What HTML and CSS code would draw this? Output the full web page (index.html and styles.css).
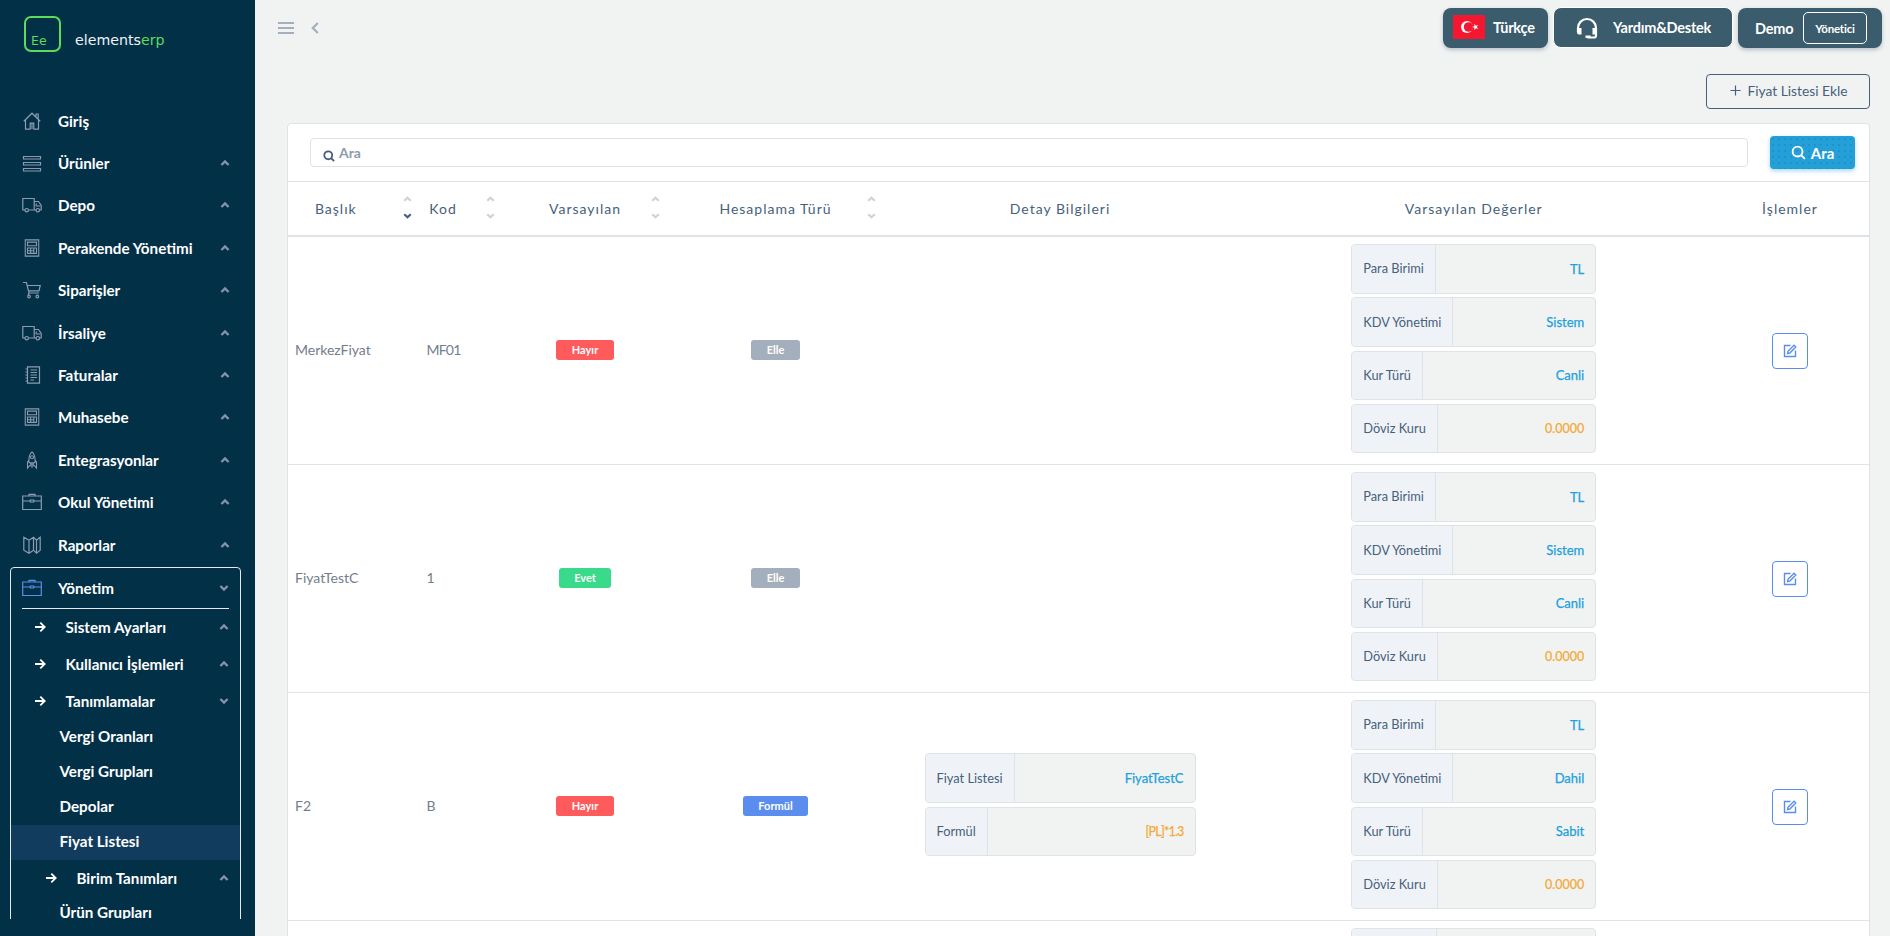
FILE: index.html
```html
<!DOCTYPE html>
<html lang="tr">

<head>
    <meta charset="UTF-8">
    <meta name="viewport" content="width=device-width, initial-scale=1.0">
    <title>Fiyat Listesi</title>
    <link rel="stylesheet" href="styles.css">
</head>

<body>
    <!-- icons -->
    <svg class="sprite" width="0" height="0">
        <symbol id="home" viewBox="0 0 18 18"><path d="M.8 9.3 9 1.2l8.2 8.1M2.5 8v9.2h4.7v-6h3.6v6h4.7V8M13 5V2h2.2v5.2M9 11v6"/></symbol>
        <symbol id="list" viewBox="0 0 18 18"><path d="M.5 2.500h17v2.500H.5zM.5 8.500h17v2.500H.5zM.5 14.500h17v2.500H.5z"/></symbol>
        <symbol id="truck" viewBox="0 0 20 18"><path d="M3 14H.8V2.500h11.400V14H6.500M12.200 5.500h4.300l2.700 4V14h-1.500M14 14h-1.800M14.200 7.500v2.500h4"/><circle cx="4.700" cy="14.200" r="1.700"/><circle cx="15.800" cy="14.200" r="1.700"/></symbol>
        <symbol id="calc" viewBox="0 0 18 20"><path d="M1.500 1h15v18h-15zM4 3.500h10v4H4zM4 10h10M4 13h7M4 16h10M4 9.500v7M7.500 9.500v7M11 9.500v7M14 9.500v7"/></symbol>
        <symbol id="cart" viewBox="0 0 18 18"><path d="M0 1.500h3.400L6 12h10M4.200 4.500h13L16 9.800H5.500M6 12l-1 2"/><circle cx="6" cy="15.500" r="1.300"/><circle cx="14.300" cy="15.500" r="1.300"/></symbol>
        <symbol id="note" viewBox="0 0 18 18"><path d="M4.500.8h12v16.400h-12zM7.500 4h6.500M7.500 6.500h6.500M7.500 9h6.500M7.500 11.500h6.500M7.500 14h3.500M2.500 3h2M2.500 6h2M2.500 9h2M2.500 12h2M2.500 15h2"/></symbol>
        <symbol id="rocket" viewBox="0 0 18 20"><path d="M9 1c-3 2.500-3.800 6-3.300 12h6.600C12.800 7 12 3.500 9 1zM5.600 10 4 12.500V19l2.500-3M12.400 10l1.600 2.500V19l-2.500-3M7.500 13v4M9 13v6M10.500 13v4"/><circle cx="9" cy="7" r="1.700"/></symbol>
        <symbol id="case" viewBox="0 0 20 18"><path d="M.7 3h18.600v13.500H.7zM7 3V1.300h6V3M.7 8H8M12 8h7.300M8.300 7h3.400v2H8.300z"/></symbol>
        <symbol id="map" viewBox="0 0 18 18"><path d="M.8 1.200 6 4.200l4.500-3 3 3 3.700-3v13l-3.700 3-3-3-4.500 3-5.200-3zM6 4.200v13M10.500 1.200v13M13.500 4.200v13"/></symbol>
        <symbol id="up" viewBox="0 0 10 8"><path d="m1.400 6 3.600-3.500L8.600 6"/></symbol>
        <symbol id="down" viewBox="0 0 10 8"><path d="M1.400 2 5 5.500 8.600 2"/></symbol>
        <symbol id="arrow" viewBox="0 0 12 12"><path d="M1 6h9.500M6.300 1.600 10.700 6l-4.400 4.400"/></symbol>
        <symbol id="search" viewBox="0 0 16 16"><circle cx="7" cy="7" r="5.300"/><path d="m11 11 3.800 3.800"/></symbol>
        <symbol id="edit" viewBox="0 0 14 14"><path d="M7.500 1.500h-6v11h11v-6M4.600 9.600l.4-2.300L11 1.300l1.800 1.800-6 6z"/></symbol>
    </svg>

    <div class="layout">
        <aside class="sidebar">
            <div class="brand">
                <span class="brand-logo">Ee</span>
                <span class="brand-text">elements<b>erp</b></span>
            </div>
            <nav class="menu">
                <a class="item"><svg class="icon"><use href="#home"/></svg>Giriş</a>
                <a class="item"><svg class="icon"><use href="#list"/></svg>Ürünler<svg class="chev"><use href="#up"/></svg></a>
                <a class="item"><svg class="icon"><use href="#truck"/></svg>Depo<svg class="chev"><use href="#up"/></svg></a>
                <a class="item"><svg class="icon"><use href="#calc"/></svg>Perakende Yönetimi<svg class="chev"><use href="#up"/></svg></a>
                <a class="item"><svg class="icon"><use href="#cart"/></svg>Siparişler<svg class="chev"><use href="#up"/></svg></a>
                <a class="item"><svg class="icon"><use href="#truck"/></svg>İrsaliye<svg class="chev"><use href="#up"/></svg></a>
                <a class="item"><svg class="icon"><use href="#note"/></svg>Faturalar<svg class="chev"><use href="#up"/></svg></a>
                <a class="item"><svg class="icon"><use href="#calc"/></svg>Muhasebe<svg class="chev"><use href="#up"/></svg></a>
                <a class="item"><svg class="icon"><use href="#rocket"/></svg>Entegrasyonlar<svg class="chev"><use href="#up"/></svg></a>
                <a class="item"><svg class="icon"><use href="#case"/></svg>Okul Yönetimi<svg class="chev"><use href="#up"/></svg></a>
                <a class="item"><svg class="icon"><use href="#map"/></svg>Raporlar<svg class="chev"><use href="#up"/></svg></a>
                <div class="group">
                    <a class="item open"><svg class="icon"><use href="#case"/></svg>Yönetim<svg class="chev"><use href="#down"/></svg></a>
                    <a class="sub"><svg class="arrow"><use href="#arrow"/></svg>Sistem Ayarları<svg class="chev"><use href="#up"/></svg></a>
                    <a class="sub"><svg class="arrow"><use href="#arrow"/></svg>Kullanıcı İşlemleri<svg class="chev"><use href="#up"/></svg></a>
                    <a class="sub"><svg class="arrow"><use href="#arrow"/></svg>Tanımlamalar<svg class="chev"><use href="#down"/></svg></a>
                    <a class="leaf">Vergi Oranları</a>
                    <a class="leaf">Vergi Grupları</a>
                    <a class="leaf">Depolar</a>
                    <a class="leaf active">Fiyat Listesi</a>
                    <a class="sub deep"><svg class="arrow"><use href="#arrow"/></svg>Birim Tanımları<svg class="chev"><use href="#up"/></svg></a>
                    <a class="leaf">Ürün Grupları</a>
                </div>
            </nav>
        </aside>

        <main class="content">
            <header class="topbar">
                <svg class="burger" viewBox="0 0 16 12"><path d="M0 1h16M0 6h16M0 11h16"/></svg>
                <svg class="back" viewBox="0 0 8 12"><path d="M6.800 1 1.800 6l5 5"/></svg>
                <div class="actions">
                    <button class="top-btn lang">
                        <svg class="flag" viewBox="0 0 32 24"><rect width="32" height="24" fill="#f5172f"/><circle cx="14" cy="12" r="6" fill="#fff"/><circle cx="15.600" cy="12" r="4.800" fill="#f5172f"/><path fill="#fff" d="m19 12 2.400-.8V8.800l1.500 2 2.400-.8-1.500 2 1.500 2-2.400-.8-1.500 2v-2.400z"/></svg>
                        Türkçe
                    </button>
                    <button class="top-btn help">
                        <svg class="headset" viewBox="0 0 22 22"><path d="M2 15V11a9 9 0 0 1 18 0v7.500a2 2 0 0 1-2 2h-6.500" fill="none" stroke="#fff" stroke-width="2.200"/><path d="M1 11h4.500v6.500H3a2 2 0 0 1-2-2zM16.500 11H21v4.500a2 2 0 0 1-2 2h-2.500zM9.500 18.500h5V21h-5z" fill="#fff"/></svg>
                        Yardım&amp;Destek
                    </button>
                    <button class="top-btn user">Demo <span class="role">Yönetici</span></button>
                </div>
            </header>

            <div class="page-actions">
                <button class="add-btn"><svg class="plus" viewBox="0 0 12 12"><path d="M6 .5v11M.5 6h11"/></svg>Fiyat Listesi Ekle</button>
            </div>

            <section class="card">
                <div class="search-row">
                    <div class="search-box"><svg class="search-icon"><use href="#search"/></svg>Ara</div>
                    <button class="search-btn"><svg class="search-icon"><use href="#search"/></svg>Ara</button>
                </div>
                <table>
                    <colgroup>
                        <col class="c-title"><col class="c-code"><col class="c-default"><col class="c-calc"><col class="c-detail"><col class="c-values"><col class="c-ops">
                    </colgroup>
                    <thead>
                        <tr>
                            <th class="narrow"><div class="th">Başlık<span class="sort"><svg><use href="#up"/></svg><svg class="on"><use href="#down"/></svg></span></div></th>
                            <th class="narrow"><div class="th">Kod<span class="sort"><svg><use href="#up"/></svg><svg><use href="#down"/></svg></span></div></th>
                            <th><div class="th">Varsayılan<span class="sort"><svg><use href="#up"/></svg><svg><use href="#down"/></svg></span></div></th>
                            <th><div class="th">Hesaplama Türü<span class="sort"><svg><use href="#up"/></svg><svg><use href="#down"/></svg></span></div></th>
                            <th>Detay Bilgileri</th>
                            <th>Varsayılan Değerler</th>
                            <th>İşlemler</th>
                        </tr>
                    </thead>
                    <tbody>
                        <tr>
                            <td class="text">MerkezFiyat</td>
                            <td class="text code">MF01</td>
                            <td><span class="badge red">Hayır</span></td>
                            <td><span class="badge grey">Elle</span></td>
                            <td></td>
                            <td>
                                <div class="values">
                                    <div class="field"><label>Para Birimi</label><span>TL</span></div>
                                    <div class="field"><label>KDV Yönetimi</label><span>Sistem</span></div>
                                    <div class="field"><label>Kur Türü</label><span>Canli</span></div>
                                    <div class="field"><label>Döviz Kuru</label><span class="num">0.0000</span></div>
                                </div>
                            </td>
                            <td><button class="edit-btn"><svg><use href="#edit"/></svg></button></td>
                        </tr>
                        <tr>
                            <td class="text">FiyatTestC</td>
                            <td class="text code">1</td>
                            <td><span class="badge green">Evet</span></td>
                            <td><span class="badge grey">Elle</span></td>
                            <td></td>
                            <td>
                                <div class="values">
                                    <div class="field"><label>Para Birimi</label><span>TL</span></div>
                                    <div class="field"><label>KDV Yönetimi</label><span>Sistem</span></div>
                                    <div class="field"><label>Kur Türü</label><span>Canli</span></div>
                                    <div class="field"><label>Döviz Kuru</label><span class="num">0.0000</span></div>
                                </div>
                            </td>
                            <td><button class="edit-btn"><svg><use href="#edit"/></svg></button></td>
                        </tr>
                        <tr>
                            <td class="text">F2</td>
                            <td class="text code">B</td>
                            <td><span class="badge red">Hayır</span></td>
                            <td><span class="badge blue">Formül</span></td>
                            <td>
                                <div class="values wide">
                                    <div class="field"><label>Fiyat Listesi</label><span>FiyatTestC</span></div>
                                    <div class="field"><label>Formül</label><span class="num formula">[PL]*1.3</span></div>
                                </div>
                            </td>
                            <td>
                                <div class="values">
                                    <div class="field"><label>Para Birimi</label><span>TL</span></div>
                                    <div class="field"><label>KDV Yönetimi</label><span>Dahil</span></div>
                                    <div class="field"><label>Kur Türü</label><span>Sabit</span></div>
                                    <div class="field"><label>Döviz Kuru</label><span class="num">0.0000</span></div>
                                </div>
                            </td>
                            <td><button class="edit-btn"><svg><use href="#edit"/></svg></button></td>
                        </tr>
                        <tr>
                            <td></td>
                            <td></td>
                            <td></td>
                            <td></td>
                            <td></td>
                            <td>
                                <div class="values">
                                    <div class="field"><label class="blank"></label><span></span></div>
                                    <div class="field"></div>
                                    <div class="field"></div>
                                    <div class="field"></div>
                                </div>
                            </td>
                            <td></td>
                        </tr>
                    </tbody>
                </table>
            </section>
        </main>
    </div>
</body>

</html>
```
FILE: styles.css
```css
* {
    box-sizing: border-box;
}

body {
    margin: 0;
    font-family: Lato, "Open Sans", sans-serif;
    font-size: 15px;
    color: #475f7b;
    background-color: #f1f3f2;
    overflow: hidden;
}

button {
    font-family: inherit;
    cursor: pointer;
}

svg {
    fill: none;
    stroke: currentColor;
    flex: none;
}

.sprite {
    position: absolute;
}

.layout {
    display: flex;
    height: 936px;
    overflow: hidden;
}

/* sidebar */
.sidebar {
    width: 255px;
    flex: none;
    background-color: #023047;
    color: #fff;
    padding-bottom: 17px;
    display: flex;
    flex-direction: column;
}

.brand {
    height: 99.5px;
    flex: none;
    padding: 16px 0 0 24px;
    display: flex;
    align-items: flex-start;
    gap: 14px;
    font-family: "DejaVu Sans", sans-serif;
}

.brand-logo {
    width: 37px;
    height: 36px;
    border: 2px solid #5ddb5a;
    border-radius: 7px;
    color: #5ddb5a;
    font-size: 12.5px;
    line-height: 14px;
    padding: 16px 0 0 5px;
}

.brand-text {
    font-size: 14.2px;
    line-height: 16px;
    padding-top: 16px;
    color: #f1f3f8;
}

.brand-text b {
    font-weight: 400;
    color: #5ddb5a;
}

.menu {
    flex: 1;
    min-height: 0;
    overflow: hidden;
    font-size: 15.2px;
    font-weight: 700;
}

.item {
    display: flex;
    align-items: center;
    height: 42.4px;
    padding: 0 25px 0 22px;
}

.item .icon {
    width: 20px;
    height: 18px;
    margin-right: 16px;
    stroke-width: 1.2;
    color: #8c9bb0;
}

.chev {
    width: 10px;
    height: 8px;
    margin-left: auto;
    stroke-width: 2.4;
    color: #8494a7;
}

.group {
    margin: 1px 14px 0 10px;
    border: 1px solid #e6eaee;
    border-radius: 4px 4px 0 0;
}

.item.open {
    height: 41px;
    margin: 0 11px;
    padding: 0;
    border-bottom: 1px solid #e6eaee;
}

.item.open .icon {
    color: #5a8dee;
}

.sub {
    display: flex;
    align-items: center;
    height: 37px;
    padding: 0 11px 0 23px;
}

.arrow {
    width: 12px;
    height: 12px;
    margin-right: 19.5px;
    stroke-width: 1.8;
}

.leaf {
    display: flex;
    align-items: center;
    height: 35px;
    padding: 0 0 2px 48.5px;
}

.leaf.active {
    background-color: #123c5e;
}

.sub.deep {
    height: 36px;
    padding-left: 34px;
}

/* top bar */
.content {
    flex: 1;
    min-width: 0;
}

.topbar {
    display: flex;
    height: 74px;
    padding: 8px 8px 0 23px;
}

.burger {
    width: 16px;
    height: 12px;
    margin-top: 14px;
    stroke-width: 2;
    color: #a3afbd;
}

.back {
    width: 8px;
    height: 12px;
    margin: 14px 0 0 17px;
    stroke-width: 2.2;
    color: #a3afbd;
}

.actions {
    display: flex;
    align-items: flex-start;
    gap: 5px;
    margin-left: auto;
}

.top-btn {
    display: flex;
    align-items: center;
    height: 40px;
    padding-bottom: 2px;
    border: none;
    border-radius: 8px;
    background-color: #3a5c6c;
    color: #fff;
    font-size: 14.5px;
    font-weight: 700;
    letter-spacing: -0.2px;
    box-shadow: 0 2px 4px rgba(71, 95, 123, 0.35);
}

.lang {
    width: 105px;
    padding: 0 0 2px 10px;
    gap: 8px;
}

.flag {
    width: 32px;
    height: 24px;
    stroke: none;
}

.help {
    width: 180px;
    height: 41px;
    margin-top: -1px;
    padding: 0 0 0 22px;
    gap: 15px;
    border: 1px solid #fff;
    box-shadow: none;
}

.headset {
    width: 22px;
    height: 22px;
    stroke: none;
}

.user {
    width: 144px;
    padding: 0 15px 0 17px;
    justify-content: space-between;
}

.role {
    width: 64px;
    height: 32px;
    border: 1px solid #fff;
    border-radius: 5px;
    font-size: 11.5px;
    line-height: 31px;
}

.page-actions {
    display: flex;
    justify-content: flex-end;
    padding: 0 20px 14px 0;
}

.add-btn {
    display: flex;
    align-items: center;
    justify-content: center;
    gap: 6px;
    width: 164px;
    height: 35px;
    padding: 0 0 3px 2px;
    border: 1px solid #475f7b;
    border-radius: 4px;
    background: none;
    color: #475f7b;
    font-size: 13.8px;
}

.plus {
    width: 11px;
    height: 11px;
    stroke-width: 1.3;
}

/* card */
.card {
    margin: 0 20px 0 32px;
    border: 1px solid #dfe3e7;
    border-radius: 4px;
    background-color: #fff;
}

.search-row {
    display: flex;
    align-items: center;
    gap: 22px;
    height: 58px;
    padding: 0 14px 0 22px;
    border-bottom: 1px solid #dfe3e7;
}

.search-box {
    flex: 1;
    display: flex;
    align-items: center;
    gap: 4px;
    height: 29px;
    padding: 0 0 1px 12px;
    border: 1px solid #dfe3e7;
    border-radius: 4px;
    font-size: 14px;
    font-weight: 700;
    color: #8d9bad;
}

.search-box .search-icon {
    width: 12px;
    height: 12px;
    margin-top: 8px;
    stroke-width: 2.4;
    color: #475f7b;
}

.search-btn {
    display: flex;
    align-items: center;
    justify-content: center;
    gap: 5px;
    width: 85px;
    height: 33px;
    border: none;
    border-radius: 4px;
    background-color: #259fd8;
    background-image: radial-gradient(circle, #1c8fc6 0.6px, transparent 1px);
    background-size: 6px 6px;
    color: #fff;
    font-size: 15px;
    font-weight: 700;
    box-shadow: 0 2px 4px rgba(37, 159, 216, 0.4);
}

.search-btn .search-icon {
    width: 15px;
    height: 15px;
    stroke-width: 2;
}

table {
    width: 100%;
    table-layout: fixed;
    border-collapse: separate;
    border-spacing: 0;
}

.c-title {
    width: 131.5px;
}

.c-code {
    width: 83px;
}

.c-default {
    width: 165px;
}

.c-calc {
    width: 216px;
}

.c-detail {
    width: 353px;
}

.c-values {
    width: 474.5px;
}

th {
    height: 55px;
    padding: 0 0 1px;
    border-bottom: 2px solid #dfe3e7;
    font-size: 14px;
    font-weight: 400;
    letter-spacing: 1px;
}

.th {
    position: relative;
}

.narrow .th {
    padding-right: 36px;
}

.sort {
    position: absolute;
    top: -5px;
    right: 8px;
    display: flex;
    flex-direction: column;
    gap: 9px;
    color: #cdd2d8;
}

.sort svg {
    width: 9px;
    height: 8px;
    stroke-width: 2.4;
}

.sort .on {
    color: #475f7b;
}

td {
    height: 228px;
    padding: 0;
    border-bottom: 1px solid #dfe3e7;
    text-align: center;
    vertical-align: middle;
}

td.text {
    padding: 0 0 2px 7px;
    text-align: left;
    font-size: 14px;
    color: #727e8c;
}

td.code {
    letter-spacing: -0.8px;
}

.badge {
    display: inline-block;
    height: 20px;
    padding: 0 15.5px;
    margin-bottom: 1px;
    border-radius: 3px;
    color: #fff;
    font-size: 11px;
    font-weight: 700;
    line-height: 19px;
    vertical-align: middle;
}

.red {
    background-color: #ff5b5c;
}

.green {
    background-color: #39da8a;
}

.grey {
    background-color: #a3afbd;
}

.blue {
    background-color: #5a8dee;
}

.values {
    width: 245px;
    margin: 0 auto;
}

.values.wide {
    width: 271px;
}

.field {
    display: flex;
    height: 49.3px;
    margin-bottom: 3.8px;
    border: 1px solid #dfe3e7;
    border-radius: 4px;
    background-color: #f1f3f2;
    overflow: hidden;
}

.field label {
    display: flex;
    align-items: center;
    padding: 0 11px 1px;
    border-right: 1px solid #dfe3e7;
    background-color: #eff3f8;
    font-size: 12.8px;
}

.field .blank {
    width: 85px;
}

.field span {
    flex: 1;
    display: flex;
    align-items: center;
    justify-content: flex-end;
    padding-right: 11px;
    font-size: 13px;
    color: #219fdc;
    -webkit-text-stroke: 0.25px currentColor;
}

.field .num {
    font-size: 12.5px;
    color: #f5a93a;
}

.field .formula {
    letter-spacing: -0.8px;
}

.edit-btn {
    display: inline-flex;
    align-items: center;
    justify-content: center;
    width: 36px;
    height: 36px;
    padding: 0;
    border: 1px solid #5a8dee;
    border-radius: 4px;
    background: none;
    color: #5a8dee;
    vertical-align: middle;
}

.edit-btn svg {
    width: 14px;
    height: 14px;
    stroke-width: 1.4;
}
```
